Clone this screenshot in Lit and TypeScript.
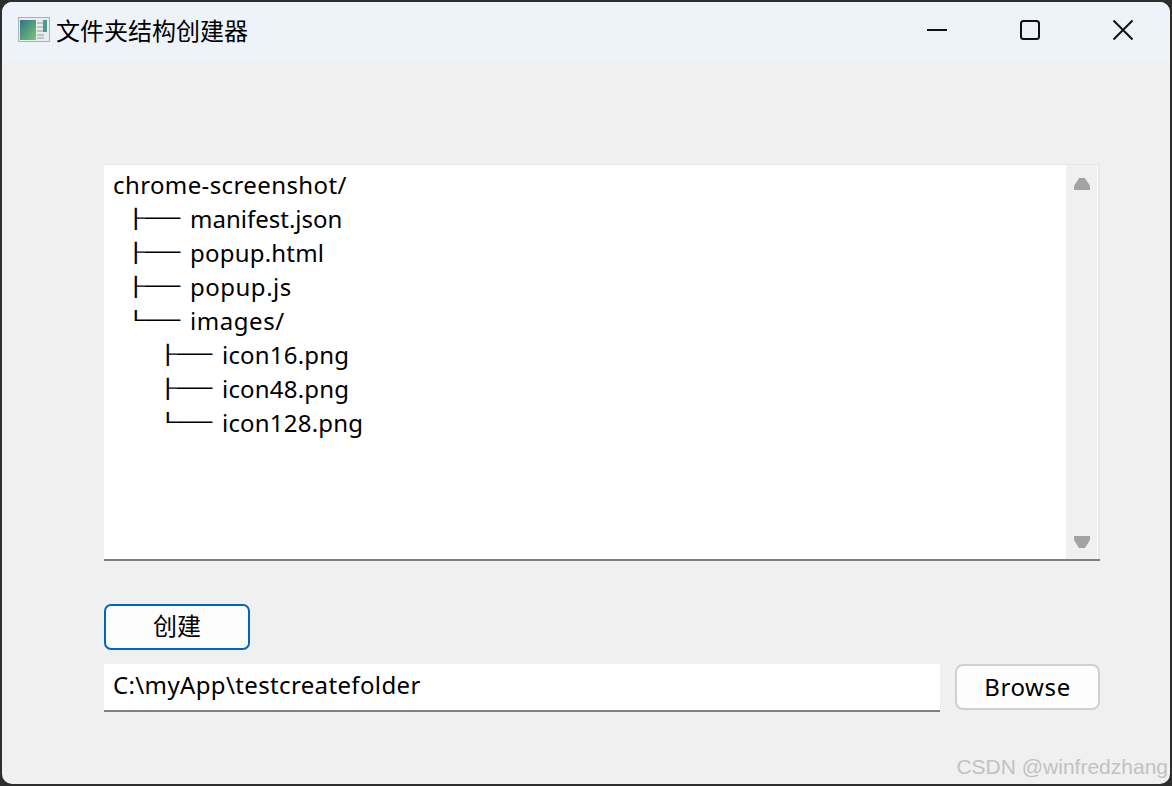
import { LitElement, html, css } from "lit";
import { customElement } from "lit/decorators.js";

interface Row { depth: number; glyph: string; name: string; track: number }

const ROWS: Row[] = [
  { depth: 0, glyph: "", name: "chrome-screenshot/", track: 0.39 },
  { depth: 1, glyph: "├──", name: "manifest.json", track: 0 },
  { depth: 1, glyph: "├──", name: "popup.html", track: 0.2 },
  { depth: 1, glyph: "├──", name: "popup.js", track: 0.5 },
  { depth: 1, glyph: "└──", name: "images/", track: 0.55 },
  { depth: 2, glyph: "├──", name: "icon16.png", track: 0.2 },
  { depth: 2, glyph: "├──", name: "icon48.png", track: 0.2 },
  { depth: 2, glyph: "└──", name: "icon128.png", track: 0.2 },
];

@customElement("app-root")
export class AppRoot extends LitElement {
  static styles = css`
    :host {
      display: block;
      width: 1172px;
      height: 786px;
      background: #2e2e2e;
      font-family: "Noto Sans", "Noto Sans CJK SC", sans-serif;
      font-size: 24px;
      color: #000;
    }
    .window {
      position: relative;
      box-sizing: border-box;
      width: 1172px;
      height: 786px;
      border: 2px solid #2e2e2e;
      border-radius: 12px;
      background: #f0f0f0;
      overflow: hidden;
      display: flex;
      flex-direction: column;
    }
    .titlebar {
      height: 60px;
      box-sizing: border-box;
      flex: none;
      background: #eef3fa;
      display: flex;
      align-items: center;
      padding: 0 0 5px 16px;
    }
    .app-icon { width: 32px; height: 25px; flex: none; }
    .title {
      margin-left: 6px;
      font-family: "Noto Sans CJK SC", sans-serif;
      font-size: 24px;
      line-height: 32px;
      flex: 1;
    }
    .winbtns { display: flex; margin-right: 1px; }
    .winbtn {
      width: 93px;
      height: 44px;
      display: flex;
      align-items: center;
      justify-content: center;
    }
    .winbtn svg { width: 22px; height: 22px; display: block; }
    .content {
      flex: 1;
      display: flex;
      flex-direction: column;
      padding: 102px 70px 0 102px;
    }
    .listbox {
      height: 397px;
      box-sizing: border-box;
      background: #fff;
      border-bottom: 2px solid #808080;
      box-shadow: inset -2px 1px 0 #e8e8e8;
      display: flex;
    }
    .tree {
      flex: 1;
      padding: 4px 0 0 9px;
      margin: 0;
      list-style: none;
    }
    .row {
      height: 34px;
      line-height: 34px;
      white-space: pre;
      display: flex;
      align-items: center;
    }
    .depth-1 { padding-left: 14px; }
    .depth-2 { padding-left: 46px; }
    .branch {
      display: inline-block;
      width: 36px;
      margin-right: 27px;
      font-family: "Liberation Mono", monospace;
      font-size: 19.5px;
      line-height: 24px;
      transform: scaleX(1.52);
      transform-origin: left center;
      flex: none;
    }
    .scrollbar {
      width: 31px;
      margin: 1px 3px 0 0;
      background: #f0f0f0;
      display: flex;
      flex-direction: column;
      justify-content: space-between;
      align-items: center;
      padding: 13px 0 11px;
      box-sizing: border-box;
      flex: none;
    }
    .scrollbar svg { width: 16px; height: 12px; display: block; }
    .create {
      margin-top: 43px;
      width: 146px;
      height: 46px;
      box-sizing: border-box;
      border: 2px solid #0067c0;
      border-radius: 7px;
      background: #fdfdfd;
      font-family: "Noto Sans CJK SC", sans-serif;
      font-size: 24px;
      line-height: 38px;
      padding: 0 0 4px;
      color: #000;
    }
    .path-row {
      margin-top: 14px;
      display: flex;
      gap: 15px;
      align-items: flex-start;
    }
    .path {
      flex: 1;
      height: 48px;
      box-sizing: border-box;
      background: #fff;
      border-bottom: 2px solid #808080;
      padding-left: 9px;
      line-height: 41px;
      letter-spacing: 0.36px;
    }
    .browse {
      width: 145px;
      height: 46px;
      box-sizing: border-box;
      border: 2px solid #d0d0d0;
      border-radius: 8px;
      background: #fdfdfd;
      font-family: "Noto Sans", sans-serif;
      font-size: 24px;
      line-height: 38px;
      letter-spacing: 0.6px;
      padding: 0 0 1px;
      color: #000;
    }
    .mark {
      position: absolute;
      right: 2px;
      bottom: 2px;
      font-family: "Liberation Sans", sans-serif;
      font-size: 21px;
      line-height: 30px;
      color: #c2c2c2;
      white-space: nowrap;
    }
  `;

  render() {
    return html`
      <div class="window">
        <header class="titlebar">
          <svg class="app-icon" viewBox="0 0 32 25">
            <defs>
              <linearGradient id="g" x1="0" y1="0" x2="1" y2="1">
                <stop offset="0" stop-color="#2f7486" />
                <stop offset="1" stop-color="#7cc47a" />
              </linearGradient>
            </defs>
            <rect x="0.5" y="0.5" width="31" height="24" fill="#e9edef" stroke="#a9b2b8" />
            <rect x="2" y="3" width="16" height="20" fill="url(#g)" />
            <path d="M19 6h7M19 10h7M19 14h7M19 18h7M19 21h7" stroke="#bcc2c6" stroke-width="2" />
            <rect x="25" y="3" width="4" height="12" fill="#4b9c8b" />
          </svg>
          <div class="title">文件夹结构创建器</div>
          <div class="winbtns">
            <div class="winbtn">
              <svg viewBox="0 0 22 22"><path d="M1 11h20" stroke="#111" stroke-width="2" /></svg>
            </div>
            <div class="winbtn">
              <svg viewBox="0 0 22 22"><rect x="2" y="2" width="18" height="18" rx="2.5" fill="none" stroke="#111" stroke-width="2" /></svg>
            </div>
            <div class="winbtn">
              <svg viewBox="0 0 22 22"><path d="M1.5 1.5l19 19M20.5 1.5l-19 19" stroke="#111" stroke-width="2" fill="none" /></svg>
            </div>
          </div>
        </header>
        <main class="content">
          <section class="listbox">
            <ul class="tree">
              ${ROWS.map(
                (r) => html`<li class="row depth-${r.depth}">${r.glyph
                  ? html`<span class="branch">${r.glyph}</span>`
                  : ""}<span style="letter-spacing:${r.track}px">${r.name}</span></li>`
              )}
            </ul>
            <div class="scrollbar">
              <svg viewBox="0 0 16 12"><path d="M5 0h6l5 8v4H0V8z" fill="#a3a3a3" /></svg>
              <svg viewBox="0 0 16 12"><path d="M0 0h16v4l-5 8H5L0 4z" fill="#a3a3a3" /></svg>
            </div>
          </section>
          <button class="create">创建</button>
          <div class="path-row">
            <div class="path">C:\\myApp\\testcreatefolder</div>
            <button class="browse">Browse</button>
          </div>
        </main>
        <div class="mark">CSDN @winfredzhang</div>
      </div>
    `;
  }
}
